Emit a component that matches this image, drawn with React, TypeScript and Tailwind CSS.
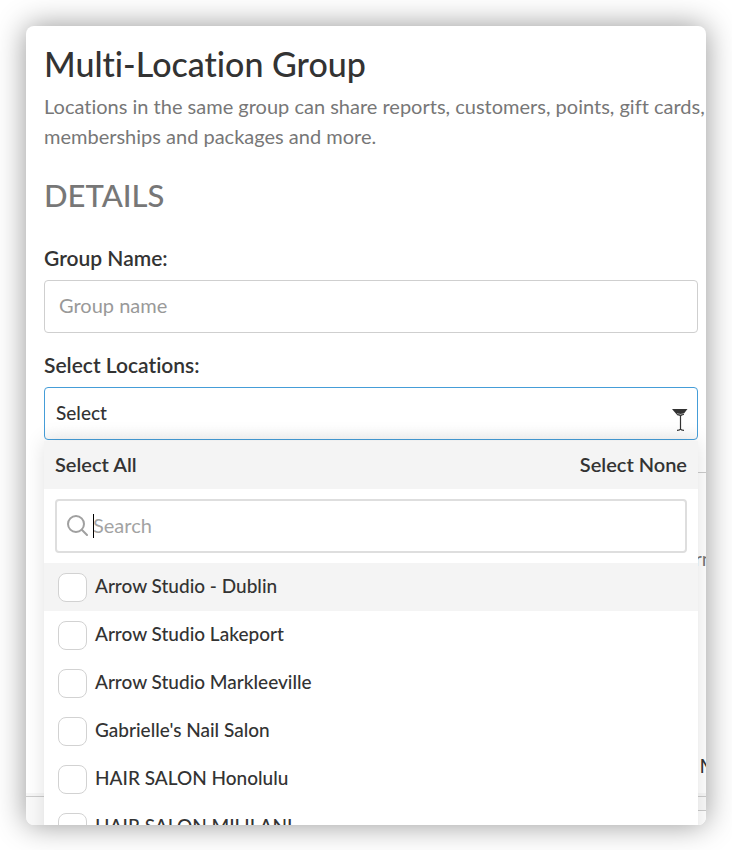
import React from "react";

const locations = [
  "Arrow Studio - Dublin",
  "Arrow Studio Lakeport",
  "Arrow Studio Markleeville",
  "Gabrielle's Nail Salon",
  "HAIR SALON Honolulu",
  "HAIR SALON MILILANI",
];

function LocationRow({ name, active }: { name: string; active: boolean }) {
  return (
    <li>
      <label className={`flex h-12 items-center gap-2 pl-[14px] ${active ? "bg-[#f4f4f4]" : "bg-white"}`}>
        <input
          type="checkbox"
          className="size-[29px] shrink-0 appearance-none rounded-lg border border-[#d2d2d2] bg-white checked:bg-[#3c96d2]"
        />
        <span className="pb-px text-[19px] font-medium whitespace-nowrap">{name}</span>
      </label>
    </li>
  );
}

function LocationMenu() {
  return (
    <div className="absolute inset-x-0 top-full mt-px bg-white shadow-[0_0_20px_rgba(0,0,0,0.12)]">
      <div className="flex h-12 items-center justify-between bg-[#f4f4f4] px-[11px] pb-[2px] font-semibold">
        <button type="button">Select All</button>
        <button type="button">Select None</button>
      </div>
      <div className="px-[11px] py-[10px]">
        <div className="relative">
          <input
            type="text"
            aria-label="Search locations"
            placeholder="Search"
            className="block h-[54px] w-full rounded border-2 border-[#dedede] bg-white pb-[2px] pl-9 outline-none placeholder:text-[#a3a3a3]"
          />
          <svg
            className="absolute top-4 left-3 size-[21px]"
            viewBox="0 0 21 21"
            fill="none"
            stroke="#a0a0a0"
            strokeWidth="2"
            strokeLinecap="round"
          >
            <circle cx="9" cy="9" r="8" />
            <path d="M14.8 14.8 20 20" />
          </svg>
          <span className="absolute top-[15px] left-[38px] h-6 w-px bg-black" />
        </div>
      </div>
      <ul>
        {locations.map((name, i) => (
          <LocationRow key={name} name={name} active={i === 0} />
        ))}
      </ul>
    </div>
  );
}

export default function App() {
  return (
    <div className="h-screen bg-white px-[26px] pt-[26px] pb-[25px] font-['Lato','Liberation_Sans',sans-serif] text-xl text-[#333] [font-variant-ligatures:none]">
      <main className="flex h-full flex-col overflow-hidden rounded-lg bg-white shadow-[0_0_30px_rgba(0,0,0,0.42)]">
        <form className="flex flex-1 flex-col pt-[18px] pr-2 pl-[18px]">
          <h1 className="text-[34px] leading-10 font-medium whitespace-nowrap">Multi-Location Group</h1>
          <p className="mt-[7px] leading-[30px] whitespace-nowrap text-[#777]">
            Locations in the same group can share reports, customers, points, gift cards,
            <br />
            memberships and packages and more.
          </p>
          <h2 className="mt-6 text-[31px] leading-10 font-medium text-[#777]">DETAILS</h2>
          <label htmlFor="group-name" className="mt-7 text-[21px] leading-[30px] font-semibold">
            Group Name:
          </label>
          <input
            id="group-name"
            type="text"
            placeholder="Group name"
            className="mt-[7px] h-[53px] w-full rounded border border-[#cfcfcf] px-[14px] pb-[3px] outline-none placeholder:text-[#999]"
          />
          <label htmlFor="locations" className="mt-[17px] text-[21px] leading-[30px] font-semibold">
            Select Locations:
          </label>
          <div className="relative mt-[7px]">
            <select
              id="locations"
              className="block h-[53px] w-full appearance-none rounded border border-[#459dd8] bg-[linear-gradient(#fff_75%,#f9f9f9)] px-[11px] text-[19px] font-medium outline-none"
            >
              <option>Select</option>
            </select>
            <svg className="pointer-events-none absolute top-5 right-[10px] h-6 w-4" viewBox="0 0 16 24">
              <path d="M0 2h15.500L10 9H6z" fill="#333" />
              <path
                d="M5 7.500q3 0 3.500 1.500q.5-1.500 3.500-1.500M8.500 9v13M5 23.300q3 0 3.500-1.300q.5 1.300 3.500 1.300"
                fill="none"
                stroke="#fff"
                strokeWidth="2.500"
                opacity="0.6"
              />
              <path
                d="M5 7.500q3 0 3.500 1.500q.5-1.500 3.500-1.500M8.500 9v13M5 23.300q3 0 3.500-1.300q.5 1.300 3.500 1.300"
                fill="none"
                stroke="#333"
                strokeWidth="1.200"
              />
            </svg>
            <LocationMenu />
          </div>
          <hr className="mt-8 -mr-2 border-[#ccc]" />
          <div className="-mr-2 mt-[70px] flex justify-end overflow-hidden leading-[30px] text-[#777]">
            <span className="-mr-[7px]">rn</span>
          </div>
          <div className="-mr-2 mt-auto mb-4 flex justify-end overflow-hidden leading-[30px]">
            <span className="-mr-3">M</span>
          </div>
        </form>
        <footer className="h-[29px] border-t border-[#ccc] bg-[#fafafa] pt-[13px] shadow-[0_-3px_0_rgba(0,0,0,0.03)]">
          <div className="ml-auto h-4 w-10 border-t border-[#ccc] bg-white" />
        </footer>
      </main>
    </div>
  );
}
